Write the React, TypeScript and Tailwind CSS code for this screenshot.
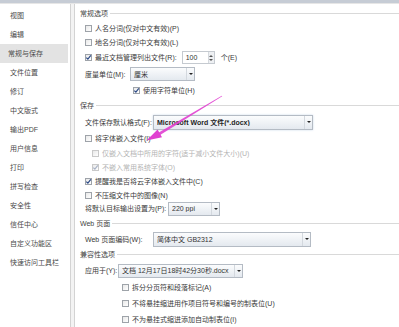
import React from 'react';

const sidebarItems = [
  '视图',
  '编辑',
  '常规与保存',
  '文件位置',
  '修订',
  '中文版式',
  '输出PDF',
  '用户信息',
  '打印',
  '拼写检查',
  '安全性',
  '信任中心',
  '自定义功能区',
  '快速访问工具栏',
];

const CheckBox: React.FC<{ checked?: boolean; disabled?: boolean }> = ({ checked, disabled }) => (
  <span
    className={
      'relative w-[7px] h-[7px] shrink-0 border bg-gradient-to-br from-[#e9e9e9] to-white ' +
      (disabled ? 'border-[#c9c9c9]' : 'border-[#9ea3a9]')
    }
  >
    {checked && (
      <svg viewBox="0 0 7 7" className="absolute -left-px -top-px w-[7px] h-[7px]">
        <path
          d="M1.3 3.6 L2.9 5.2 L5.8 1.4"
          fill="none"
          stroke={disabled ? '#a9b3c6' : '#2c4a86'}
          strokeWidth="1.2"
        />
      </svg>
    )}
  </span>
);

const Select: React.FC<{ text: string; className: string; bold?: boolean }> = ({ text, className, bold }) => (
  <div
    className={
      'flex items-center border border-[#b4bbc4] bg-gradient-to-b from-[#fbfcfd] to-[#e4e9ef] pl-[3px] ' + className
    }
  >
    <span className={'flex-1 truncate ' + (bold ? 'text-[#1f1f1f] font-semibold' : 'text-[#333]')}>{text}</span>
    <span className="w-[8px] h-full flex items-center justify-center border-l border-[#d3d8de]">
      <span className="w-0 h-0 border-l-[2px] border-r-[2px] border-t-[2px] border-l-transparent border-r-transparent border-t-[#222]" />
    </span>
  </div>
);

const GroupHeader: React.FC<{ title: string; className: string }> = ({ title, className }) => (
  <div className={'flex items-center gap-[2px] ' + className}>
    <span className="text-[#444]">{title}</span>
    <span className="flex-1 h-px bg-[#d9d9d9]" />
  </div>
);

const CheckRow: React.FC<{
  label: string;
  className: string;
  checked?: boolean;
  disabled?: boolean;
}> = ({ label, className, checked, disabled }) => (
  <div className={'flex items-center gap-[3px] ' + className}>
    <CheckBox checked={checked} disabled={disabled} />
    <span className={disabled ? 'text-[#b3b3b3]' : 'text-[#3a3a3a]'}>{label}</span>
  </div>
);

const App: React.FC = () => {
  return (
    <div
      className="relative w-[399px] h-[327px] overflow-hidden bg-white text-[7px] leading-none"
      style={{ fontFamily: '"Liberation Sans", "Noto Sans CJK SC", sans-serif' }}
    >
      {/* window top edge */}
      <div className="h-[3px] bg-[#c6ccd5]" />
      <div className="h-px bg-[#e6e6e6]" />

      <div className="flex h-[323px]">
        {/* Left nav */}
        <div className="w-[70px] shrink-0 pt-[2px] bg-white">
          {sidebarItems.map(item => (
            <div
              key={item}
              className={
                'h-[19px] flex items-center pl-[8px] mx-[2px] text-[#4a4a4a] ' +
                (item === '常规与保存' ? 'bg-[#e3e3e3] -ml-[1px] pl-[9px]' : '')
              }
            >
              {item}
            </div>
          ))}
        </div>
        <div className="w-[5px] shrink-0 border-x border-[#d3d3d3] bg-[#f3f3f3]" />

        {/* Options */}
        <div className="flex-1 flex flex-col pl-[5px] pt-[3px]">
          <GroupHeader title="常规选项" className="h-[14px]" />
          <CheckRow label="人名分词(仅对中文有效)(P)" className="h-[15px] ml-[5px]" />
          <CheckRow label="地名分词(仅对中文有效)(L)" className="h-[15px] ml-[5px]" />
          <div className="h-[16px] ml-[5px] flex items-center gap-[3px]">
            <CheckBox checked />
            <span className="text-[#3a3a3a]">最近文档管理列出文件(R):</span>
            <div className="ml-[2px] flex items-center h-[13px] w-[33px] border border-[#c5cad0] bg-white">
              <span className="flex-1 pl-[3px] text-[#333]">100</span>
              <span className="w-[6px] h-full flex flex-col items-center justify-center gap-[2px] bg-[#eef0f3] border-l border-[#d5d9de]">
                <span className="w-0 h-0 border-l-[2px] border-r-[2px] border-b-[2px] border-l-transparent border-r-transparent border-b-[#555]" />
                <span className="w-0 h-0 border-l-[2px] border-r-[2px] border-t-[2px] border-l-transparent border-r-transparent border-t-[#555]" />
              </span>
            </div>
            <span className="ml-[3px] text-[#3a3a3a]">个(E)</span>
          </div>
          <div className="h-[17px] ml-[5px] flex items-center">
            <span className="w-[45px] text-[#3a3a3a]">度量单位(M):</span>
            <Select text="厘米" className="h-[14px] w-[65px]" />
          </div>
          <CheckRow label="使用字符单位(H)" checked className="h-[16px] ml-[53px]" />

          <GroupHeader title="保存" className="h-[16px]" />
          <div className="h-[17px] ml-[5px] flex items-center">
            <span className="w-[68px] shrink-0 text-[#3a3a3a]">文件保存默认格式(F):</span>
            <Select
              text="Microsoft Word 文件(*.docx)"
              bold
              className="h-[15px] w-[160px] shadow-[0_0_2px_#c9d8ea]"
            />
          </div>
          <CheckRow label="将字体嵌入文件(I)" className="h-[16px] ml-[5px]" />
          <CheckRow label="仅嵌入文档中所用的字符(适于减小文件大小)(U)" disabled className="h-[15px] ml-[12px]" />
          <CheckRow label="不嵌入常用系统字体(O)" checked disabled className="h-[14px] ml-[12px]" />
          <CheckRow label="提醒我是否将云字体嵌入文件中(C)" checked className="h-[14px] ml-[5px]" />
          <CheckRow label="不压缩文件中的图像(N)" className="h-[14px] ml-[5px]" />
          <div className="h-[14px] ml-[5px] flex items-center">
            <span className="w-[83px] shrink-0 text-[#3a3a3a]">将默认目标输出设置为(P):</span>
            <Select text="220 ppi" className="h-[14px] w-[52px]" />
          </div>

          <GroupHeader title="Web 页面" className="h-[16px]" />
          <div className="h-[15px] ml-[5px] flex items-center">
            <span className="w-[68px] shrink-0 text-[#3a3a3a]">Web 页面编码(W):</span>
            <Select text="简体中文 GB2312" className="h-[15px] w-[158px]" />
          </div>

          <GroupHeader title="兼容性选项" className="h-[16px]" />
          <div className="h-[17px] ml-[5px] flex items-center">
            <span className="w-[33px] shrink-0 text-[#3a3a3a]">应用于(Y):</span>
            <Select text="文档 12月17日18时42分30秒.docx" className="h-[14px] w-[125px]" />
          </div>
          <CheckRow label="拆分分页符和段落标记(A)" className="h-[17px] ml-[42px]" />
          <CheckRow label="不将悬挂缩进用作项目符号和编号的制表位(U)" className="h-[16px] ml-[42px]" />
          <CheckRow label="不为悬挂式缩进添加自动制表位(I)" className="h-[16px] ml-[42px]" />
        </div>
      </div>

      {/* pink annotation arrow */}
      <svg className="absolute left-0 top-0 pointer-events-none" width="399" height="327">
        <polygon
          points="159.3,135.6 157.9,133.0 221.8,95.7 222.2,96.3"
          fill="#e03fd0"
          opacity="0.9"
        />
        <polygon points="146.5,140.5 162.0,137.2 157.6,129.6" fill="#e03fd0" />
      </svg>
    </div>
  );
};

export default App;
